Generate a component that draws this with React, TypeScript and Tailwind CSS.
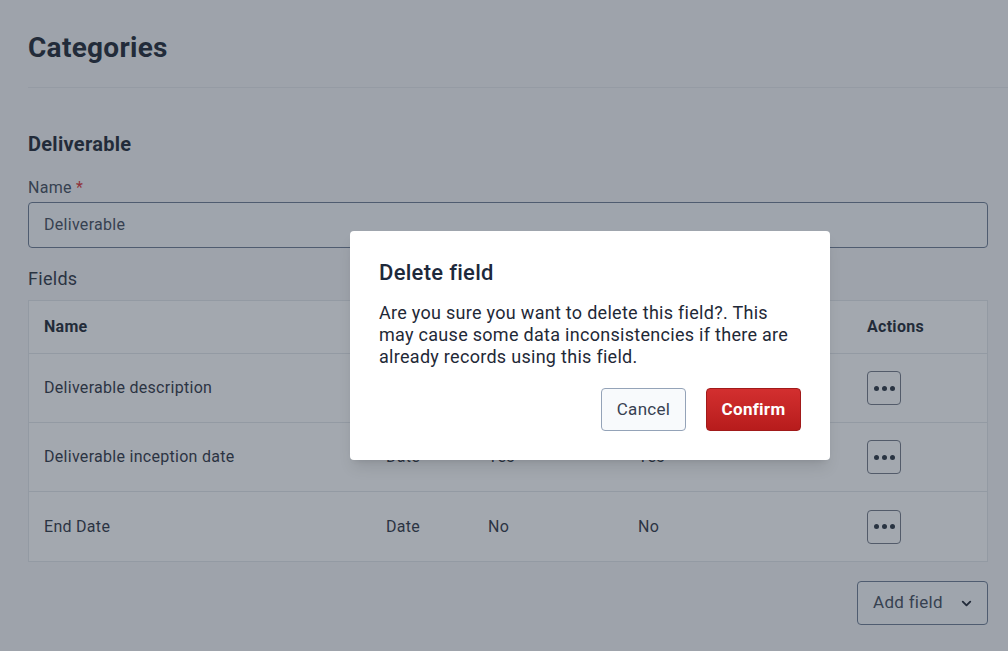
import { ChevronDown } from 'lucide-react';

const rows = [
  { name: 'Deliverable description', type: 'Text', required: 'Yes', unique: 'No' },
  { name: 'Deliverable inception date', type: 'Date', required: 'Yes', unique: 'Yes' },
  { name: 'End Date', type: 'Date', required: 'No', unique: 'No' },
];

const cols = 'grid grid-cols-[342px_102px_150px_229px_1fr] items-center';

function DotsButton() {
  return (
    <button className="w-[34px] h-[34px] rounded-[4px] border border-[#6b7280] flex items-center justify-center gap-[3px]">
      <span className="w-[5px] h-[5px] rounded-full bg-[#1f2937]" />
      <span className="w-[5px] h-[5px] rounded-full bg-[#1f2937]" />
      <span className="w-[5px] h-[5px] rounded-full bg-[#1f2937]" />
    </button>
  );
}

export default function App() {
  return (
    <div className="relative w-[1008px] h-[651px] overflow-hidden bg-[#f5f6f8] font-['Roboto',sans-serif] tracking-[0.018em] text-[#1f2937]">
      <div className="pl-[28px]">
        <div className="h-[88px] border-b border-[#e5e7eb] pt-[33px]">
          <h1 className="text-[28px] font-bold text-[#111827] leading-[30px]">Categories</h1>
        </div>
        <div className="pr-[20px]">
          <h2 className="text-[20px] font-bold text-[#111827] mt-[43px] leading-[26px]">Deliverable</h2>
          <label className="block mt-[21px] text-[16px] leading-[20px] text-[#374151]">
            Name <span className="text-[#dc2626]">*</span>
          </label>
          <div className="mt-[4px] h-[46px] rounded-[4px] border border-[#64748b] bg-[#f8fafc] flex items-center px-[15px] text-[16px] text-[#374151]">
            Deliverable
          </div>
          <div className="mt-[20px] text-[18px] leading-[22px] text-[#1f2937]">Fields</div>
          <div className="mt-[10px] border border-[#e2e5e9] bg-white">
            <div className={`${cols} h-[53px] border-b border-[#e2e5e9] text-[16px] font-bold text-[#111827]`}>
              <div className="pl-[15px]">Name</div>
              <div className="pl-[15px]">Type</div>
              <div className="pl-[15px]">Required</div>
              <div className="pl-[15px]">Unique</div>
              <div className="pl-[15px]">Actions</div>
            </div>
            {rows.map((r, i) => (
              <div
                key={r.name}
                className={`${cols} h-[69px] text-[16px] text-[#1f2937] ${i < rows.length - 1 ? 'border-b border-[#e2e5e9]' : ''}`}
              >
                <div className="pl-[15px]">{r.name}</div>
                <div className="pl-[15px]">{r.type}</div>
                <div className="pl-[15px]">{r.required}</div>
                <div className="pl-[15px]">{r.unique}</div>
                <div className="pl-[15px]">
                  <DotsButton />
                </div>
              </div>
            ))}
          </div>
          <div className="mt-[19px] flex justify-end">
            <button className="h-[44px] w-[131px] rounded-[4px] border border-[#64748b] bg-[#f8fafc] flex items-center pl-[15px] gap-[16px] text-[17px] text-[#374151]">
              Add field
              <ChevronDown className="w-[15px] h-[15px] text-[#111827]" strokeWidth={3} />
            </button>
          </div>
        </div>
      </div>

      <div className="absolute inset-0 bg-[#374151]/[0.46]" />

      <div className="absolute left-[350px] top-[231px] w-[480px] h-[229px] rounded-[4px] bg-white shadow-lg p-[29px] flex flex-col">
        <h3 className="text-[22px] leading-[26px] font-medium text-[#1e293b]">Delete field</h3>
        <p className="mt-[16px] text-[18px] leading-[22px] text-[#1f2937]">
          Are you sure you want to delete this field?. This may cause some data inconsistencies if there are already records using this field.
        </p>
        <div className="mt-[20px] flex justify-end gap-[20px]">
          <button className="h-[43px] w-[85px] rounded-[4px] border border-[#94a3b8] bg-[#f8fafc] text-[17px] text-[#374151]">
            Cancel
          </button>
          <button className="h-[43px] w-[95px] rounded-[4px] border border-[#a11a1a] bg-gradient-to-b from-[#d32f2f] to-[#b71c1c] text-[17px] font-bold text-white">
            Confirm
          </button>
        </div>
      </div>
    </div>
  );
}
